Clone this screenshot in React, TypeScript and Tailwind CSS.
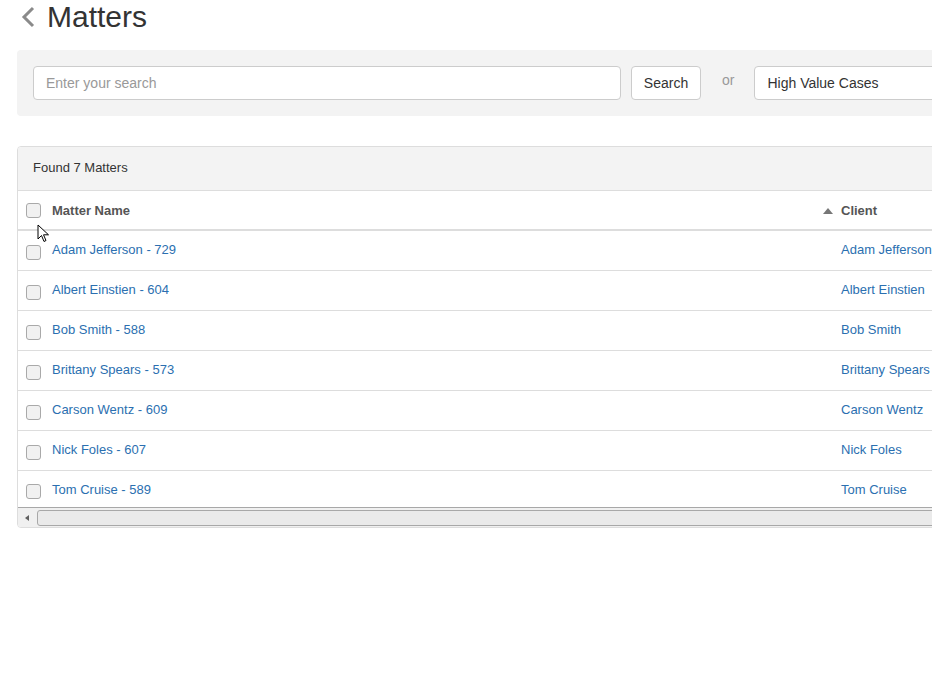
import React from "react";

const matters = [
  { name: "Adam Jefferson - 729", client: "Adam Jefferson" },
  { name: "Albert Einstien - 604", client: "Albert Einstien" },
  { name: "Bob Smith - 588", client: "Bob Smith" },
  { name: "Brittany Spears - 573", client: "Brittany Spears" },
  { name: "Carson Wentz - 609", client: "Carson Wentz" },
  { name: "Nick Foles - 607", client: "Nick Foles" },
  { name: "Tom Cruise - 589", client: "Tom Cruise" },
];

function Checkbox() {
  return (
    <span className="block w-[15px] h-[15px] rounded-[3px] border border-[#a9a9a9] bg-[#f1f1f1]" />
  );
}

export default function App() {
  return (
    <div
      className="relative w-[932px] h-[675px] overflow-hidden bg-white text-[#333]"
      style={{ fontFamily: '"Liberation Sans", Arial, sans-serif' }}
    >
      <div className="w-[1040px] pl-[17px]">
        {/* page title */}
        <div className="flex items-center h-[34px]">
          <svg width="16" height="24" viewBox="0 0 16 24" className="ml-[3px] mr-[11px]">
            <path d="M13 3 L4 12 L13 21" fill="none" stroke="#8a8a8a" strokeWidth="3" />
          </svg>
          <h1 className="text-[30px] leading-none text-[#333] -mt-[1px]">Matters</h1>
        </div>

        {/* search bar */}
        <div className="mt-[16px] bg-[#f3f3f3] rounded-[4px] px-[16px] py-[16px] flex items-center">
          <input
            className="w-[588px] h-[34px] border border-[#cccccc] rounded-[4px] bg-white px-[12px] text-[14px] placeholder:text-[#999] outline-none"
            placeholder="Enter your search"
          />
          <button className="ml-[10px] w-[70px] h-[34px] border border-[#cccccc] rounded-[4px] bg-white text-[14px] text-[#333]">
            Search
          </button>
          <span className="ml-[21px] mr-[20px] text-[14px] text-[#999] -mt-[6px]">or</span>
          <div className="w-[260px] h-[34px] border border-[#cccccc] rounded-[4px] bg-white px-[12px] flex items-center text-[14px] text-[#333]">
            High Value Cases
          </div>
        </div>

        {/* results */}
        <div className="mt-[30px] border border-[#dddddd] rounded-[4px] overflow-hidden">
          <div className="h-[44px] bg-[#f3f3f3] border-b border-[#dddddd] flex items-center pl-[15px] text-[13px] text-[#333]">
            <span className="mb-[2px]">Found 7 Matters</span>
          </div>
          <div className="h-[40px] flex items-center border-b-2 border-[#dddddd] text-[13px] font-bold text-[#555]">
            <div className="w-[34px] pl-[8px]">
              <Checkbox />
            </div>
            <div className="w-[771px] mt-[2px]">Matter Name</div>
            <div className="flex items-center mt-[2px]">
              <svg width="10" height="6" viewBox="0 0 10 6" className="mr-[8px] -mt-[1px]">
                <path d="M0 6 L5 0 L10 6 Z" fill="#777" />
              </svg>
              Client
            </div>
          </div>
          {matters.map((m, i) => {
            const last = i === matters.length - 1;
            return (
              <div
                key={m.name}
                className={`flex items-center text-[13px] text-[#2b6fb0] ${last ? "h-[36px] pt-[2px]" : "h-[40px] border-b border-[#dddddd]"}`}
              >
                <div className="w-[34px] pl-[8px] pt-[3px]">
                  <Checkbox />
                </div>
                <div className={`w-[789px] ${last ? "" : "mb-[2px]"}`}>{m.name}</div>
                <div className={last ? "" : "mb-[2px]"}>{m.client}</div>
              </div>
            );
          })}
          {/* horizontal scrollbar */}
          <div className="h-[20px] bg-[#f0f0f0] border-t border-[#a8a8a8] flex items-center">
            <svg width="16" height="16" viewBox="0 0 16 16" className="ml-[2px]">
              <path d="M9 5 L5 8 L9 11 Z" fill="#606060" />
            </svg>
            <div className="ml-[1px] flex-1 h-[16px] rounded-[3px] border border-[#a8a8a8] bg-[#eaeaea]" />
          </div>
        </div>
      </div>

      {/* mouse pointer */}
      <svg width="14" height="20" viewBox="0 0 14 20" className="absolute left-[37px] top-[224px]">
        <path d="M1 1 L1 15 L4.5 11.5 L7 17.5 L9 16.5 L6.5 10.8 L11.5 10.8 Z" fill="#fff" stroke="#000" strokeWidth="1" strokeLinejoin="round" />
      </svg>
    </div>
  );
}
